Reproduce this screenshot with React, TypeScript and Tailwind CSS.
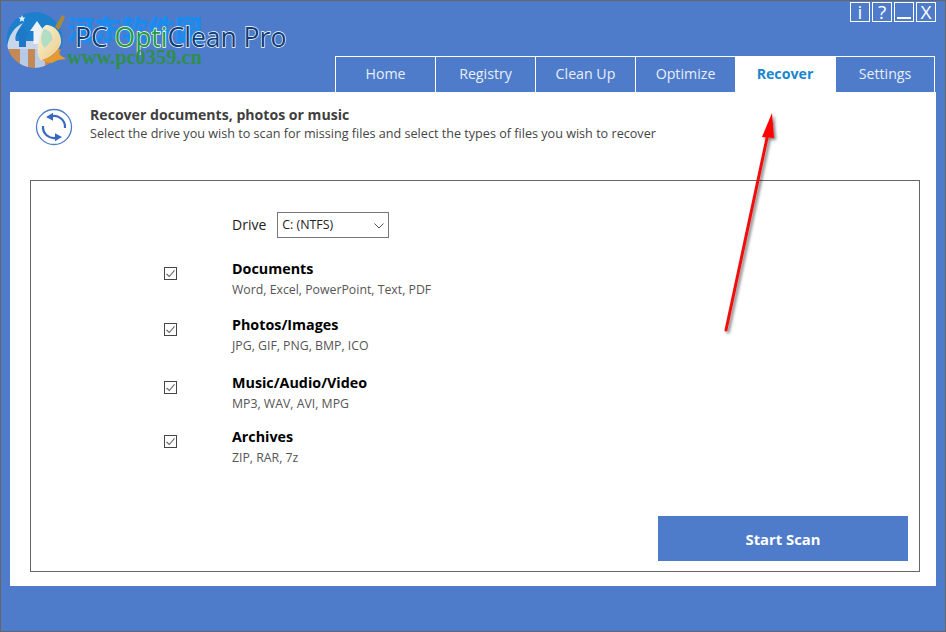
const font = { fontFamily: '"Open Sans", "Noto Sans", sans-serif' };

const tabs = ["Home", "Registry", "Clean Up", "Optimize", "Recover", "Settings"];

const groups = [
  { title: "Documents", sub: "Word, Excel, PowerPoint, Text, PDF", cls: "h-[56px]" },
  { title: "Photos/Images", sub: "JPG, GIF, PNG, BMP, ICO", cls: "h-[58px]" },
  { title: "Music/Audio/Video", sub: "MP3, WAV, AVI, MPG", cls: "h-[54px]" },
  { title: "Archives", sub: "ZIP, RAR, 7z", cls: "h-[50px]" },
];

function Logo() {
  return (
    <svg width="62" height="60" viewBox="0 0 62 60" className="shrink-0">
      <defs>
        <clipPath id="c">
          <circle cx="28.500" cy="29" r="28" />
        </clipPath>
        <linearGradient id="broom" x1="0" y1="0" x2="1" y2="1">
          <stop offset="0" stopColor="#f7f3da" />
          <stop offset="1" stopColor="#eccb87" />
        </linearGradient>
      </defs>
      <g clipPath="url(#c)">
        <rect width="62" height="38" fill="#1d80cd" />
        <rect y="38" width="62" height="24" fill="#c48a55" />
        <rect x="14" y="37" width="8" height="25" fill="#b7cbe9" />
        <rect x="29" y="37" width="10" height="25" fill="#b7cbe9" />
        <path d="M1 38 C2 25 8 16 17 12 C11 20 8 26 10 30 L40 30 L40 38Z" fill="#c9d6ec" />
        <path d="M16.500 15 L23 24 L20 24 L20 36 L13 36 L13 24 L10 24Z" fill="#1f78c6" />
        <path d="M31 10 L38 20 L35 20 L35 33 L27.500 33 L27.500 20 L24 20Z" fill="#eef3f9" />
      </g>
      <path d="M16 4 l1 2.400 2.500.2-1.900 1.600.6 2.500-2.200-1.300-2.200 1.300.6-2.500-1.900-1.600 2.500-.2z" fill="#e8eef7" />
      <path d="M40 14 C50 14 56 24 55 32 C53 40 44 46 36 50 C30 46 31 36 33 28 C34 22 36 16 40 14Z" fill="url(#broom)" />
      <path d="M38 18 C44 19 47 24 46 29 L39 37 C34 33 34 24 38 18Z" fill="#a6dcc8" opacity="0.85" />
      <path d="M49 16 L56 4 L59 6 L53 19Z" fill="#a88a3a" />
      <path d="M36 49 L46 45 L52 38 L54 44 L60 48 L52 49 L46 52 L40 51Z" fill="#e59a32" />
    </svg>
  );
}

function RecoverIcon() {
  return (
    <svg width="38" height="38" viewBox="0 0 38 38" fill="none">
      <circle cx="19" cy="19" r="17.500" stroke="#4e7cc9" strokeWidth="1.300" />
      <path d="M30 20 A11 11 0 0 0 16 8.400" stroke="#3869c2" strokeWidth="2.200" />
      <path d="M8 18 A11 11 0 0 0 22 29.600" stroke="#3869c2" strokeWidth="2.200" />
      <path d="M11 9 L18 4.800 L18 12.800Z" fill="#3869c2" />
      <path d="M27 29 L20 25.200 L20 33.200Z" fill="#3869c2" />
    </svg>
  );
}

function Check() {
  return (
    <svg width="13" height="13" viewBox="0 0 13 13" fill="none" className="shrink-0">
      <rect x="0.500" y="0.500" width="12" height="12" fill="#fff" stroke="#444" />
      <path d="M2.500 7 L5.300 9.500 L10.500 3.300" stroke="#666" strokeWidth="1.100" />
    </svg>
  );
}

function WinButton({ children }: { children: React.ReactNode }) {
  return (
    <div className="flex h-[20px] w-[20px] items-center justify-center border border-white text-[19px] leading-[18px] text-white">
      {children}
    </div>
  );
}

export default function App() {
  return (
    <div className="relative flex h-[632px] w-[946px] flex-col overflow-hidden border border-[#666] bg-[#4e7cca]" style={font}>
      <div className="flex h-[91px] shrink-0">
        <div className="relative flex w-[334px] shrink-0 items-start pl-[5px] pt-[10px]">
          <Logo />
          <div
            className="absolute left-[66px] top-[10px] whitespace-nowrap text-[27px] font-black leading-[36px] text-[#1a8cf0]"
            style={{ fontFamily: '"Noto Sans CJK SC", serif' }}
          >
            河东软件园
          </div>
          <div
            className="absolute left-[74px] top-[18px] whitespace-nowrap text-[26.500px] leading-[36px] text-[#0f3f78]"
            style={{ WebkitTextStroke: "1.300px #fff", paintOrder: "stroke fill" }}
          >
            PC <span className="text-[#2a9a3f]">Opti</span>Clean Pro
          </div>
          <div
            className="absolute left-[66px] top-[46px] whitespace-nowrap text-[20.400px] font-bold leading-[20px] text-[#2f8f4a]"
            style={{ fontFamily: '"Liberation Serif", serif' }}
          >
            www.pc0359.cn
          </div>
        </div>
        <div className="flex flex-1 flex-col items-end">
          <div className="flex h-[55px] gap-[2px] pr-[9px] pt-[1px]">
            <WinButton>i</WinButton>
            <WinButton>?</WinButton>
            <WinButton><span className="mt-[12px] h-[2px] w-[14px] bg-white" /></WinButton>
            <WinButton>X</WinButton>
          </div>
          <div className="flex h-[36px] w-full pr-[10px]">
            {tabs.map((t) =>
              t === "Recover" ? (
                <div key={t} className="flex h-full w-[100px] items-center justify-center bg-white pb-[1px] text-[14.200px] font-bold text-[#1a86cf]">
                  {t}
                </div>
              ) : (
                <div key={t} className={`flex h-full w-[100px] items-center justify-center border-t border-l border-white pb-[2px] text-[14.200px] text-[#e8eefa] ${t === "Settings" ? "border-r" : ""}`}>
                  {t}
                </div>
              ),
            )}
          </div>
        </div>
      </div>

      <div className="mx-[9px] flex h-[494px] flex-col bg-white">
        <div className="flex h-[88px] items-start pl-[25px] pt-[13px]">
          <div className="mt-[3px]"><RecoverIcon /></div>
          <div className="ml-[17px] pt-[1px]">
            <div className="text-[14.100px] font-bold leading-[18px] text-[#404040]">Recover documents, photos or music</div>
            <div className="text-[12.620px] leading-[19px] text-[#444]">
              Select the drive you wish to scan for missing files and select the types of files you wish to recover
            </div>
          </div>
        </div>

        <div className="ml-[20px] mr-[16px] flex h-[392px] flex-col border border-[#666] pl-[133px]">
          <div className="flex h-[58px] shrink-0 items-end pb-[1px] pl-[68px]">
            <span className="mr-[11px] pt-[1px] text-[14px] leading-[26px] text-[#222]">Drive</span>
            <div className="flex h-[26px] w-[112px] items-center justify-between border border-[#777] pl-[4px] pr-[4px] pt-[1px] text-[12.400px] text-[#222]">
              <span>C: (NTFS)</span>
              <svg width="10" height="6" viewBox="0 0 10 6" fill="none">
                <path d="M0.500 0.500 L5 5 L9.500 0.500" stroke="#555" />
              </svg>
            </div>
          </div>
          <div className="flex flex-col pt-[16px]">
            {groups.map((g) => (
              <div key={g.title} className={`flex ${g.cls} items-start`}>
                <div className="mt-[12px]"><Check /></div>
                <div className="ml-[55px] mt-[4px]">
                  <div className="text-[14.300px] font-bold leading-[20px] text-black">{g.title}</div>
                  <div className="mt-[1px] text-[12.300px] leading-[20px] text-[#555]">{g.sub}</div>
                </div>
              </div>
            ))}
          </div>
          <div className="mt-auto flex justify-end pb-[10px] pr-[11px]">
            <div className="flex h-[45px] w-[250px] items-center justify-center bg-[#4e7cca] pt-[1px] text-[14.800px] font-bold text-white">
              Start Scan
            </div>
          </div>
        </div>
      </div>

      <svg className="pointer-events-none absolute left-[719px] top-[109px]" width="64" height="228" viewBox="0 0 64 228" fill="none">
        <defs>
          <filter id="s" x="-50%" y="-10%" width="200%" height="120%">
            <feDropShadow dx="2" dy="2" stdDeviation="1.500" floodColor="#000" floodOpacity="0.5" />
          </filter>
        </defs>
        <g filter="url(#s)">
          <path d="M6 220 L47 28" stroke="#f01010" strokeWidth="3" strokeLinecap="round" />
          <path d="M52 3 L42 27 L54 28Z" fill="#ff0000" />
        </g>
      </svg>
    </div>
  );
}
